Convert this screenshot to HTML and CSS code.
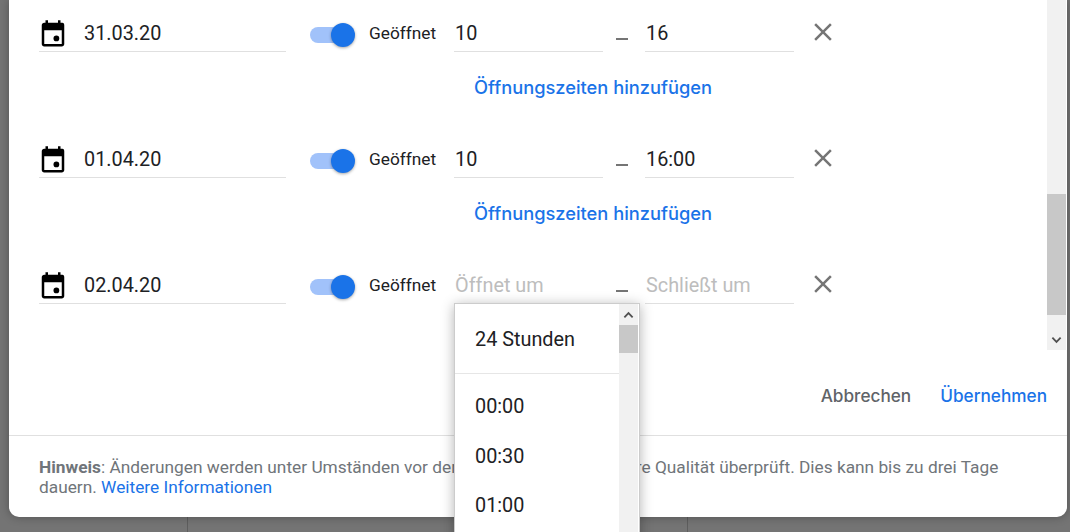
FILE: index.html
```html
<!DOCTYPE html>
<html lang="de">
<head>
    <meta charset="UTF-8">
    <title>Öffnungszeiten</title>
    <link rel="stylesheet" href="styles.css">
</head>
<body>
    <div class="backdrop">
        <div class="backdrop-line line-left"></div>
        <div class="backdrop-line line-right"></div>
    </div>

    <div class="dialog">
        <div class="scroll-area">
            <div class="days">
                <div class="day">
                    <div class="day-row">
                        <div class="date-field">
                            <svg class="cal-icon" viewBox="0 0 24 24"><path d="M6 1h2v2h8V1h2v2h1.5C20.6 3 21 3.9 21 5v15c0 1.100-.9 2-2 2H5c-1.100 0-2-.9-2-2V5c0-1.100.9-2 2-2h1V1zM5 9v11h14V9H5z"/><circle cx="14.700" cy="15.500" r="2.300"/></svg>
                            <span>31.03.20</span>
                        </div>
                        <div class="toggle"><div class="toggle-track"></div><div class="toggle-knob"></div></div>
                        <div class="toggle-label">Geöffnet</div>
                        <div class="time-field">10</div>
                        <div class="dash"></div>
                        <div class="time-field">16</div>
                        <svg class="close-icon" viewBox="0 0 24 24"><path d="M19 6.410L17.590 5 12 10.590 6.410 5 5 6.410 10.590 12 5 17.590 6.410 19 12 13.410 17.590 19 19 17.590 13.410 12z"/></svg>
                    </div>
                    <a class="add-link">Öffnungszeiten hinzufügen</a>
                </div>

                <div class="day">
                    <div class="day-row">
                        <div class="date-field">
                            <svg class="cal-icon" viewBox="0 0 24 24"><path d="M6 1h2v2h8V1h2v2h1.5C20.6 3 21 3.9 21 5v15c0 1.100-.9 2-2 2H5c-1.100 0-2-.9-2-2V5c0-1.100.9-2 2-2h1V1zM5 9v11h14V9H5z"/><circle cx="14.700" cy="15.500" r="2.300"/></svg>
                            <span>01.04.20</span>
                        </div>
                        <div class="toggle"><div class="toggle-track"></div><div class="toggle-knob"></div></div>
                        <div class="toggle-label">Geöffnet</div>
                        <div class="time-field">10</div>
                        <div class="dash"></div>
                        <div class="time-field">16:00</div>
                        <svg class="close-icon" viewBox="0 0 24 24"><path d="M19 6.410L17.590 5 12 10.590 6.410 5 5 6.410 10.590 12 5 17.590 6.410 19 12 13.410 17.590 19 19 17.590 13.410 12z"/></svg>
                    </div>
                    <a class="add-link">Öffnungszeiten hinzufügen</a>
                </div>

                <div class="day">
                    <div class="day-row">
                        <div class="date-field">
                            <svg class="cal-icon" viewBox="0 0 24 24"><path d="M6 1h2v2h8V1h2v2h1.5C20.6 3 21 3.9 21 5v15c0 1.100-.9 2-2 2H5c-1.100 0-2-.9-2-2V5c0-1.100.9-2 2-2h1V1zM5 9v11h14V9H5z"/><circle cx="14.700" cy="15.500" r="2.300"/></svg>
                            <span>02.04.20</span>
                        </div>
                        <div class="toggle"><div class="toggle-track"></div><div class="toggle-knob"></div></div>
                        <div class="toggle-label">Geöffnet</div>
                        <div class="time-field placeholder">Öffnet um</div>
                        <div class="dash"></div>
                        <div class="time-field placeholder">Schließt um</div>
                        <svg class="close-icon" viewBox="0 0 24 24"><path d="M19 6.410L17.590 5 12 10.590 6.410 5 5 6.410 10.590 12 5 17.590 6.410 19 12 13.410 17.590 19 19 17.590 13.410 12z"/></svg>
                    </div>
                </div>
            </div>

            <div class="scrollbar main-scrollbar">
                <div class="scroll-space"></div>
                <div class="scroll-thumb"></div>
                <div class="scroll-arrow">
                    <svg viewBox="0 0 12 8"><path d="M1.500 1.500L6 6l4.500-4.500" /></svg>
                </div>
            </div>
        </div>

        <div class="actions">
            <button class="btn btn-cancel">Abbrechen</button>
            <button class="btn btn-apply">Übernehmen</button>
        </div>

        <div class="note">
            <b>Hinweis</b>: Änderungen werden unter Umständen vor der Veröffentlichung auf ihre Qualität überprüft. Dies kann bis zu drei Tage dauern. <a>Weitere Informationen</a>
        </div>
    </div>

    <div class="time-menu">
        <div class="menu-list">
            <div class="menu-first">24 Stunden</div>
            <div class="menu-item">00:00</div>
            <div class="menu-item">00:30</div>
            <div class="menu-item">01:00</div>
        </div>
        <div class="scrollbar menu-scrollbar">
            <div class="menu-arrow">
                <svg viewBox="0 0 12 8"><path d="M1.500 6.500L6 2l4.500 4.500" /></svg>
            </div>
            <div class="menu-thumb"></div>
        </div>
    </div>
</body>
</html>
```

FILE: styles.css
```css
body {
    margin: 0;
    height: 532px;
    overflow: hidden;
    font-family: Roboto, "Liberation Sans", sans-serif;
    color: #202124;
    position: relative;
    background-color: #747474;
}
.backdrop {
    position: absolute;
    inset: 0;
    background-color: #747474;
}
.backdrop-line {
    position: absolute;
    top: 517px;
    bottom: 0;
    width: 1px;
    background-color: #5e5e5e;
}
.line-left {
    left: 187px;
}
.line-right {
    left: 687px;
}
.dialog {
    position: relative;
    width: 1058px;
    height: 517px;
    margin-left: 9px;
    background-color: white;
    border-radius: 0 0 10px 10px;
    display: flex;
    flex-direction: column;
    box-shadow: 0 0 10px rgba(0,0,0,0.3);
}
.scroll-area {
    display: flex;
    height: 350px;
}
.days {
    flex: 1;
    padding: 14px 0 0 30px;
    overflow: hidden;
}
.day {
    height: 126px;
}
.day-row {
    display: flex;
    align-items: flex-end;
}
.date-field {
    display: flex;
    align-items: center;
    width: 247px;
    height: 35px;
    padding-top: 2px;
    border-bottom: 1px solid #e0e0e0;
    font-size: 19.84px;
}
.cal-icon {
    width: 30px;
    height: 30px;
    margin: 0 16px 0 -1px;
    flex-shrink: 0;
}
.toggle {
    position: relative;
    width: 45px;
    height: 38px;
    margin-left: 24px;
}
.toggle-track {
    position: absolute;
    left: 0;
    top: 13px;
    width: 40px;
    height: 16px;
    border-radius: 8px;
    background-color: #a1c2fa;
}
.toggle-knob {
    position: absolute;
    right: 0;
    top: 9px;
    width: 24px;
    height: 24px;
    border-radius: 50%;
    background-color: #1a73e8;
    box-shadow: 0 1px 3px rgba(0,0,0,0.35);
}
.toggle-label {
    width: 85px;
    height: 38px;
    line-height: 39px;
    margin-left: 14px;
    font-size: 17.3px;
}
.time-field {
    width: 148px;
    height: 37px;
    line-height: 39px;
    padding-left: 1px;
    border-bottom: 1px solid #e0e0e0;
    font-size: 19.84px;
}
.placeholder {
    color: #bdbdbd;
}
.dash {
    width: 12px;
    height: 2px;
    margin: 0 17px 12px 13px;
    background-color: #757575;
}
.close-icon {
    width: 30px;
    height: 30px;
    margin: 0 0 5px 14px;
    fill: #757575;
}
.add-link {
    display: block;
    margin: 24px 0 0 435px;
    font-family: Inter, Roboto, sans-serif;
    font-size: 18.3px;
    font-weight: 500;
    color: #1a73e8;
}
.scrollbar {
    display: flex;
    flex-direction: column;
    background-color: #f1f1f1;
}
.main-scrollbar {
    width: 19px;
    margin-right: 1px;
}
.scroll-space {
    height: 194px;
}
.scroll-thumb {
    height: 121px;
    background-color: #c8c8c8;
}
.scroll-arrow {
    height: 35px;
    display: flex;
    align-items: flex-end;
    justify-content: center;
    padding-bottom: 6px;
    box-sizing: border-box;
}
.scrollbar svg {
    width: 11px;
    height: 8px;
    fill: none;
    stroke: #505050;
    stroke-width: 2;
}
.actions {
    height: 85px;
    display: flex;
    justify-content: flex-end;
    gap: 29px;
    padding: 34px 20px 0 0;
    box-sizing: border-box;
}
.btn {
    background: none;
    border: none;
    padding: 0;
    height: 22px;
    font-family: Inter, Roboto, sans-serif;
    font-size: 17.2px;
    font-weight: 500;
}
.btn-cancel {
    color: #5f6368;
}
.btn-apply {
    color: #1a73e8;
}
.note {
    flex: 1;
    border-top: 1px solid #e0e0e0;
    padding: 21px 40px 0 30px;
    font-size: 17.3px;
    line-height: 20px;
    color: #70757a;
}
.note a {
    color: #1a73e8;
}
.time-menu {
    position: absolute;
    left: 454px;
    top: 303px;
    width: 184px;
    height: 240px;
    display: flex;
    background-color: white;
    border: 1px solid #ccc;
    box-shadow: 0 2px 12px rgba(0,0,0,0.3);
}
.menu-list {
    flex: 1;
    font-size: 19.84px;
}
.menu-first {
    height: 69px;
    line-height: 71px;
    padding-left: 20px;
    border-bottom: 1px solid #e6e6e6;
    margin-bottom: 8px;
}
.menu-item {
    height: 49.500px;
    line-height: 49.500px;
    padding-left: 20px;
}
.menu-scrollbar {
    width: 19px;
    margin-right: 1px;
}
.menu-arrow {
    height: 21px;
    display: flex;
    align-items: center;
    justify-content: center;
}
.menu-thumb {
    height: 28px;
    background-color: #c8c8c8;
}
```
